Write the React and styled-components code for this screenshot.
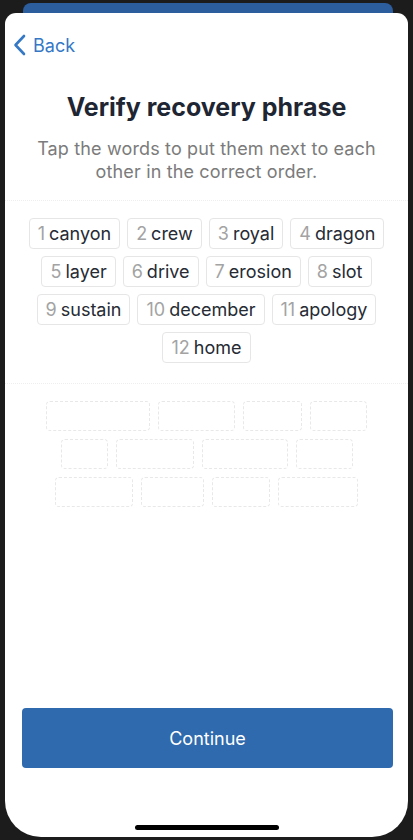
import React from "react";
import styled, { createGlobalStyle } from "styled-components";

const words = [
    "canyon", "crew", "royal", "dragon", "layer", "drive",
    "erosion", "slot", "sustain", "december", "apology", "home",
];

// empty slots the chosen words drop into
const slotRows = [
    [104, 77, 59, 57],
    [47, 78, 86, 57],
    [78, 63, 58, 80],
];

function App() {
    return (
        <Frame>
            <GlobalStyle />
            <BackCard />
            <Sheet>
                <Header>
                    <BackButton>
                        <svg width="13" height="22" viewBox="0 0 13 22">
                            <path
                                d="M11 2 L2.5 11 L11 20"
                                fill="none"
                                stroke="#3578c6"
                                strokeWidth="2.6"
                                strokeLinecap="round"
                                strokeLinejoin="round"
                            />
                        </svg>
                        <span>Back</span>
                    </BackButton>
                </Header>
                <Title>Verify recovery phrase</Title>
                <Subtitle>
                    Tap the words to put them next to each other in the
                    correct order.
                </Subtitle>
                <Divider />
                <Chips>
                    {words.map((word, index) => (
                        <Chip key={word}>
                            <Num>{index + 1}</Num>
                            {word}
                        </Chip>
                    ))}
                </Chips>
                <Divider $top={20} />
                <Slots>
                    {slotRows.map((row, i) => (
                        <SlotRow key={i}>
                            {row.map((w, j) => (
                                <Slot key={j} $w={w} />
                            ))}
                        </SlotRow>
                    ))}
                </Slots>
                <ContinueButton>Continue</ContinueButton>
                <HomeIndicator />
            </Sheet>
        </Frame>
    );
}

const GlobalStyle = createGlobalStyle`
    body {
        margin: 0;
        background: #1c1c1c;
        font-family: Inter, "Noto Sans", "Liberation Sans", sans-serif;
    }
`;

const Frame = styled.div`
    height: 840px;
    display: flex;
    flex-direction: column;
    background: #1c1c1c;
`;

const BackCard = styled.div`
    height: 10px;
    margin: 3px 20px 0 23px;
    background: #2c5e9e;
    border-radius: 8px 8px 0 0;
`;

const Sheet = styled.div`
    flex: 1;
    margin: 0 5px 3px 5px;
    background: #fff;
    border-radius: 11px 11px 36px 36px;
    display: flex;
    flex-direction: column;
`;

const Header = styled.div`
    height: 64px;
    display: flex;
    align-items: center;
    padding-left: 8px;
`;

const BackButton = styled.div`
    display: flex;
    align-items: center;
    gap: 7px;
    color: #3578c6;
    font-size: 18px;
`;

const Title = styled.h1`
    margin: 15px 0 0;
    text-align: center;
    font-size: 25px;
    line-height: 30px;
    font-weight: 700;
    color: #1f2633;
`;

const Subtitle = styled.p`
    margin: 15px 20px 0;
    text-align: center;
    font-size: 18px;
    line-height: 23px;
    letter-spacing: 0.15px;
    color: #7b7b7b;
`;

const Divider = styled.div`
    margin-top: ${(props) => props.$top || 17}px;
    border-top: 1px dotted #eeeeee;
`;

const Chips = styled.div`
    margin-top: 17px;
    padding: 0 20px;
    display: flex;
    flex-wrap: wrap;
    justify-content: center;
    gap: 7px 7px;
`;

const Chip = styled.div`
    height: 31px;
    box-sizing: border-box;
    padding: 0 8px;
    display: flex;
    align-items: center;
    border: 1px solid #e6e6e6;
    border-radius: 4px;
    font-size: 18px;
    color: #262b34;
`;

const Num = styled.span`
    color: #a3a3a3;
    margin-right: 4px;
`;

const Slots = styled.div`
    margin-top: 17px;
    display: flex;
    flex-direction: column;
    gap: 8px;
`;

const SlotRow = styled.div`
    display: flex;
    justify-content: center;
    gap: 8px;
`;

const Slot = styled.div`
    width: ${(props) => props.$w}px;
    height: 30px;
    box-sizing: border-box;
    border: 1px dashed #e8e8e8;
    border-radius: 4px;
`;

const ContinueButton = styled.div`
    margin: auto 15px 0 17px;
    height: 60px;
    display: flex;
    align-items: center;
    justify-content: center;
    background: #2e6aad;
    border-radius: 4px;
    color: #fff;
    font-size: 18px;
`;

const HomeIndicator = styled.div`
    width: 144px;
    height: 5px;
    margin: 57px auto 7px;
    background: #000;
    border-radius: 3px;
`;

export default App;
